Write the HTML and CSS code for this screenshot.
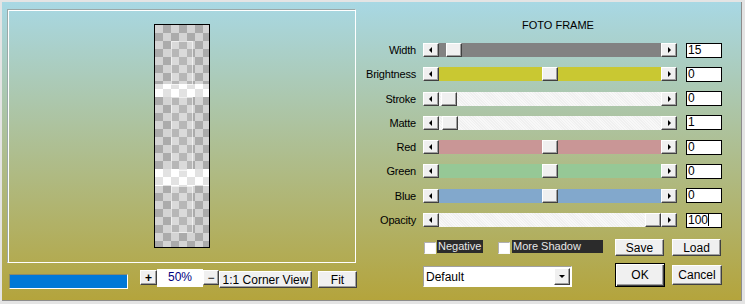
FILE: index.html
```html
<!DOCTYPE html>
<html lang="en">
<head>
    <meta charset="UTF-8">
    <title>Foto Frame</title>
    <link rel="stylesheet" href="styles.css">
</head>
<body>
    <div class="window">
        <div class="left">
            <div class="preview">
                <div class="strip">
                    <div class="band band-1"></div>
                    <div class="band band-2"></div>
                    <div class="mat mat-1"></div>
                    <div class="mat mat-2"></div>
                    <div class="mat mat-3"></div>
                </div>
            </div>
            <div class="viewbar">
                <div class="progress"></div>
                <button class="btn plus">+</button>
                <div class="zoom-field">50%</div>
                <button class="btn minus">&minus;</button>
                <button class="btn corner">1:1 Corner View</button>
                <button class="btn fit">Fit</button>
            </div>
        </div>

        <div class="right">
            <div class="title">FOTO FRAME</div>

            <div class="rows">
                <div class="row">
                    <span class="label">Width</span>
                    <div class="slider">
                        <span class="arrow arrow-left"></span>
                        <div class="track track-gray"><span class="thumb" style="left: 7px"></span></div>
                        <span class="arrow arrow-right"></span>
                    </div>
                    <div class="value">15</div>
                </div>
                <div class="row">
                    <span class="label">Brightness</span>
                    <div class="slider">
                        <span class="arrow arrow-left"></span>
                        <div class="track track-yellow"><span class="thumb" style="left: 103px"></span></div>
                        <span class="arrow arrow-right"></span>
                    </div>
                    <div class="value">0</div>
                </div>
                <div class="row">
                    <span class="label">Stroke</span>
                    <div class="slider">
                        <span class="arrow arrow-left"></span>
                        <div class="track track-white"><span class="thumb" style="left: 2px"></span></div>
                        <span class="arrow arrow-right"></span>
                    </div>
                    <div class="value">0</div>
                </div>
                <div class="row">
                    <span class="label">Matte</span>
                    <div class="slider">
                        <span class="arrow arrow-left"></span>
                        <div class="track track-white"><span class="thumb" style="left: 3px"></span></div>
                        <span class="arrow arrow-right"></span>
                    </div>
                    <div class="value">1</div>
                </div>
                <div class="row">
                    <span class="label">Red</span>
                    <div class="slider">
                        <span class="arrow arrow-left"></span>
                        <div class="track track-red"><span class="thumb" style="left: 103px"></span></div>
                        <span class="arrow arrow-right"></span>
                    </div>
                    <div class="value">0</div>
                </div>
                <div class="row">
                    <span class="label">Green</span>
                    <div class="slider">
                        <span class="arrow arrow-left"></span>
                        <div class="track track-green"><span class="thumb" style="left: 103px"></span></div>
                        <span class="arrow arrow-right"></span>
                    </div>
                    <div class="value">0</div>
                </div>
                <div class="row">
                    <span class="label">Blue</span>
                    <div class="slider">
                        <span class="arrow arrow-left"></span>
                        <div class="track track-blue"><span class="thumb" style="left: 103px"></span></div>
                        <span class="arrow arrow-right"></span>
                    </div>
                    <div class="value">0</div>
                </div>
                <div class="row">
                    <span class="label">Opacity</span>
                    <div class="slider">
                        <span class="arrow arrow-left"></span>
                        <div class="track track-white"><span class="thumb" style="left: 206px"></span></div>
                        <span class="arrow arrow-right"></span>
                    </div>
                    <div class="value focused">100<span class="caret"></span></div>
                </div>
            </div>

            <div class="options">
                <span class="check"></span>
                <span class="check-label negative">Negative</span>
                <span class="check second"></span>
                <span class="check-label shadow">More Shadow</span>
                <button class="btn save">Save</button>
                <button class="btn load">Load</button>
            </div>

            <div class="actions">
                <div class="select">
                    <span class="select-text">Default</span>
                    <span class="select-btn"><span class="down"></span></span>
                </div>
                <button class="btn ok">OK</button>
                <button class="btn cancel">Cancel</button>
            </div>
        </div>
    </div>
</body>
</html>
```

FILE: styles.css
```css
body {
    margin: 0;
    padding: 2px 3px 3px 2px;
    width: 745px;
    height: 304px;
    box-sizing: border-box;
    overflow: hidden;
    background: #e4e4e4;
    font-family: 'Liberation Sans', Arial, sans-serif;
    font-size: 11px;
    color: #000;
}

.window {
    display: flex;
    width: 740px;
    height: 299px;
    box-sizing: border-box;
    border-right: 1px solid #8c8c8c;
    border-bottom: 1px solid #8c8c8c;
    background: linear-gradient(to bottom, #a8d8e4 0%, #b4a43c 100%);
}

/* left side: preview */

.left {
    width: 356px;
    padding: 7px 0 0 5px;
    box-sizing: border-box;
}

.preview {
    width: 349px;
    height: 254px;
    box-sizing: border-box;
    border: 1px solid;
    border-color: #9aa8a8 #fff #fff #9aa8a8;
    box-shadow: inset 1px 1px 0 #fff;
    display: flex;
    justify-content: center;
    align-items: center;
}

.strip {
    position: relative;
    width: 54px;
    height: 222px;
    border: 1px solid #000;
    background-color: #d4d4d4;
    background-image: conic-gradient(#ababab 25%, transparent 0 50%, #ababab 0 75%, transparent 0);
    background-size: 16px 16px;
}

.band {
    position: absolute;
    left: 0;
    right: 0;
    background-color: #fff;
    background-image: conic-gradient(#e2e2e2 25%, transparent 0 50%, #e2e2e2 0 75%, transparent 0);
    background-size: 16px 16px;
}

.band-1 { top: 59px; height: 13px; background-position: 0 -59px; }
.band-2 { top: 144px; height: 17px; background-position: 0 -144px; }

.mat {
    position: absolute;
    left: 16px;
    width: 22px;
    box-sizing: border-box;
    border: 1px solid rgba(255, 255, 255, 0.6);
    background: rgba(255, 255, 255, 0.15);
}

.mat-1 { top: 16px; height: 44px; }
.mat-2 { top: 72px; height: 74px; }
.mat-3 { top: 161px; height: 47px; }

.viewbar {
    display: flex;
    align-items: flex-start;
    margin-top: 6px;
    height: 21px;
}

.progress {
    width: 119px;
    height: 15px;
    margin: 5px 0 0 2px;
    box-sizing: border-box;
    background: #0078d7;
    border: 1px solid;
    border-color: #8a8a6a #fff #fff #8a8a6a;
}

/* buttons */

.btn {
    margin: 0;
    padding: 0;
    font-family: inherit;
    font-size: 11px;
    color: #000;
    background: #f0f0f0;
    box-sizing: border-box;
    border: 1px solid;
    border-color: #fff #404040 #404040 #fff;
    box-shadow: inset -1px -1px 0 #a0a0a0;
    line-height: 1;
}

.plus {
    width: 17px;
    height: 15px;
    margin: 1px 0 0 12px;
    font-weight: bold;
    font-size: 12px;
}

.zoom-field {
    width: 46px;
    height: 18px;
    background: #fff;
    color: #000080;
    font-size: 12px;
    line-height: 16px;
    text-align: center;
}

.minus {
    width: 16px;
    height: 15px;
    margin-top: 1px;
    font-size: 12px;
}

.corner {
    width: 93px;
    height: 17px;
    margin-top: 2px;
    font-size: 12px;
}

.fit {
    width: 39px;
    height: 17px;
    margin: 2px 0 0 6px;
    font-size: 12px;
}

/* right side: controls */

.right {
    flex: 1;
    padding-top: 17px;
}

.title {
    padding-left: 164px;
    line-height: 13px;
}

.rows {
    display: flex;
    flex-direction: column;
    gap: 10.3px;
    margin-top: 11px;
}

.row {
    display: flex;
    align-items: center;
    height: 14px;
}

.label {
    width: 58px;
    text-align: right;
    letter-spacing: -0.2px;
}

.slider {
    display: flex;
    width: 254px;
    height: 14px;
    margin-left: 7px;
}

.arrow {
    position: relative;
    width: 16px;
    height: 14px;
    box-sizing: border-box;
    background: #f0f0f0;
    border: 1px solid;
    border-color: #fff #404040 #404040 #fff;
    box-shadow: inset -1px -1px 0 #a0a0a0;
}

.arrow::after {
    content: "";
    position: absolute;
    top: 3px;
    border-top: 3px solid transparent;
    border-bottom: 3px solid transparent;
}

.arrow-left::after {
    left: 5px;
    border-right: 3px solid #000;
}

.arrow-right::after {
    left: 6px;
    border-left: 3px solid #000;
}

.track {
    position: relative;
    flex: 1;
}

.track-gray { background: #828282; }
.track-yellow { background: #c9c832; }
.track-white {
    background: repeating-linear-gradient(45deg, #f8f8f8 0 1px, #f0f0f0 1px 2px);
}
.track-red { background: #c99696; }
.track-green { background: #96c896; }
.track-blue { background: #82a8cc; }

.thumb {
    position: absolute;
    top: 0;
    width: 16px;
    height: 14px;
    box-sizing: border-box;
    background: #f0f0f0;
    border: 1px solid;
    border-color: #fff #404040 #404040 #fff;
    box-shadow: inset -1px -1px 0 #a0a0a0;
}

.value {
    width: 36px;
    height: 15px;
    margin-left: 9px;
    box-sizing: border-box;
    border: 1px solid #000;
    background: #fff;
    font-size: 12px;
    line-height: 13px;
    padding-left: 1px;
}

.caret {
    display: inline-block;
    width: 1px;
    height: 12px;
    background: #000;
    vertical-align: top;
}

.options {
    display: flex;
    align-items: flex-start;
    height: 17px;
    margin-top: 12px;
    padding-left: 66px;
}

.check {
    width: 12px;
    height: 12px;
    margin-top: 3px;
    box-sizing: border-box;
    background: #fff;
    border: 1px solid;
    border-color: #b0b0b0 #f8f8f8 #f8f8f8 #b0b0b0;
}

.check.second {
    margin-left: 15px;
}

.check-label {
    height: 13px;
    margin: 1px 0 0 1px;
    background: #2b2b2b;
    color: #e8e8e8;
    line-height: 13px;
    padding-left: 1px;
    box-sizing: border-box;
}

.negative { width: 46px; }
.shadow { width: 91px; margin-left: 2px; }

.save {
    width: 49px;
    height: 17px;
    margin-left: 12px;
    font-size: 12px;
}

.load {
    width: 49px;
    height: 17px;
    margin-left: 8px;
    font-size: 12px;
}

.actions {
    display: flex;
    align-items: flex-start;
    margin-top: 7px;
    padding-left: 65px;
}

.select {
    display: flex;
    align-items: center;
    width: 149px;
    height: 21px;
    margin-top: 3px;
    box-sizing: border-box;
    background: #fff;
    border: 1px solid;
    border-color: #a0a0a0 #fff #fff #a0a0a0;
    padding: 1px 1px 1px 2px;
}

.select-text {
    flex: 1;
    font-size: 12px;
}

.select-btn {
    position: relative;
    width: 16px;
    height: 17px;
    box-sizing: border-box;
    background: #f0f0f0;
    border: 1px solid;
    border-color: #fff #404040 #404040 #fff;
    box-shadow: inset -1px -1px 0 #a0a0a0;
}

.down {
    position: absolute;
    left: 4px;
    top: 6px;
    border-left: 3px solid transparent;
    border-right: 3px solid transparent;
    border-top: 3px solid #000;
}

.ok {
    width: 50px;
    height: 24px;
    margin-left: 43px;
    border-color: #000;
    box-shadow: inset 1px 1px 0 #fff, inset -1px -1px 0 #404040, inset -2px -2px 0 #a0a0a0;
    font-size: 12px;
}

.cancel {
    width: 50px;
    height: 20px;
    margin: 2px 0 0 7px;
    font-size: 12px;
}
```
